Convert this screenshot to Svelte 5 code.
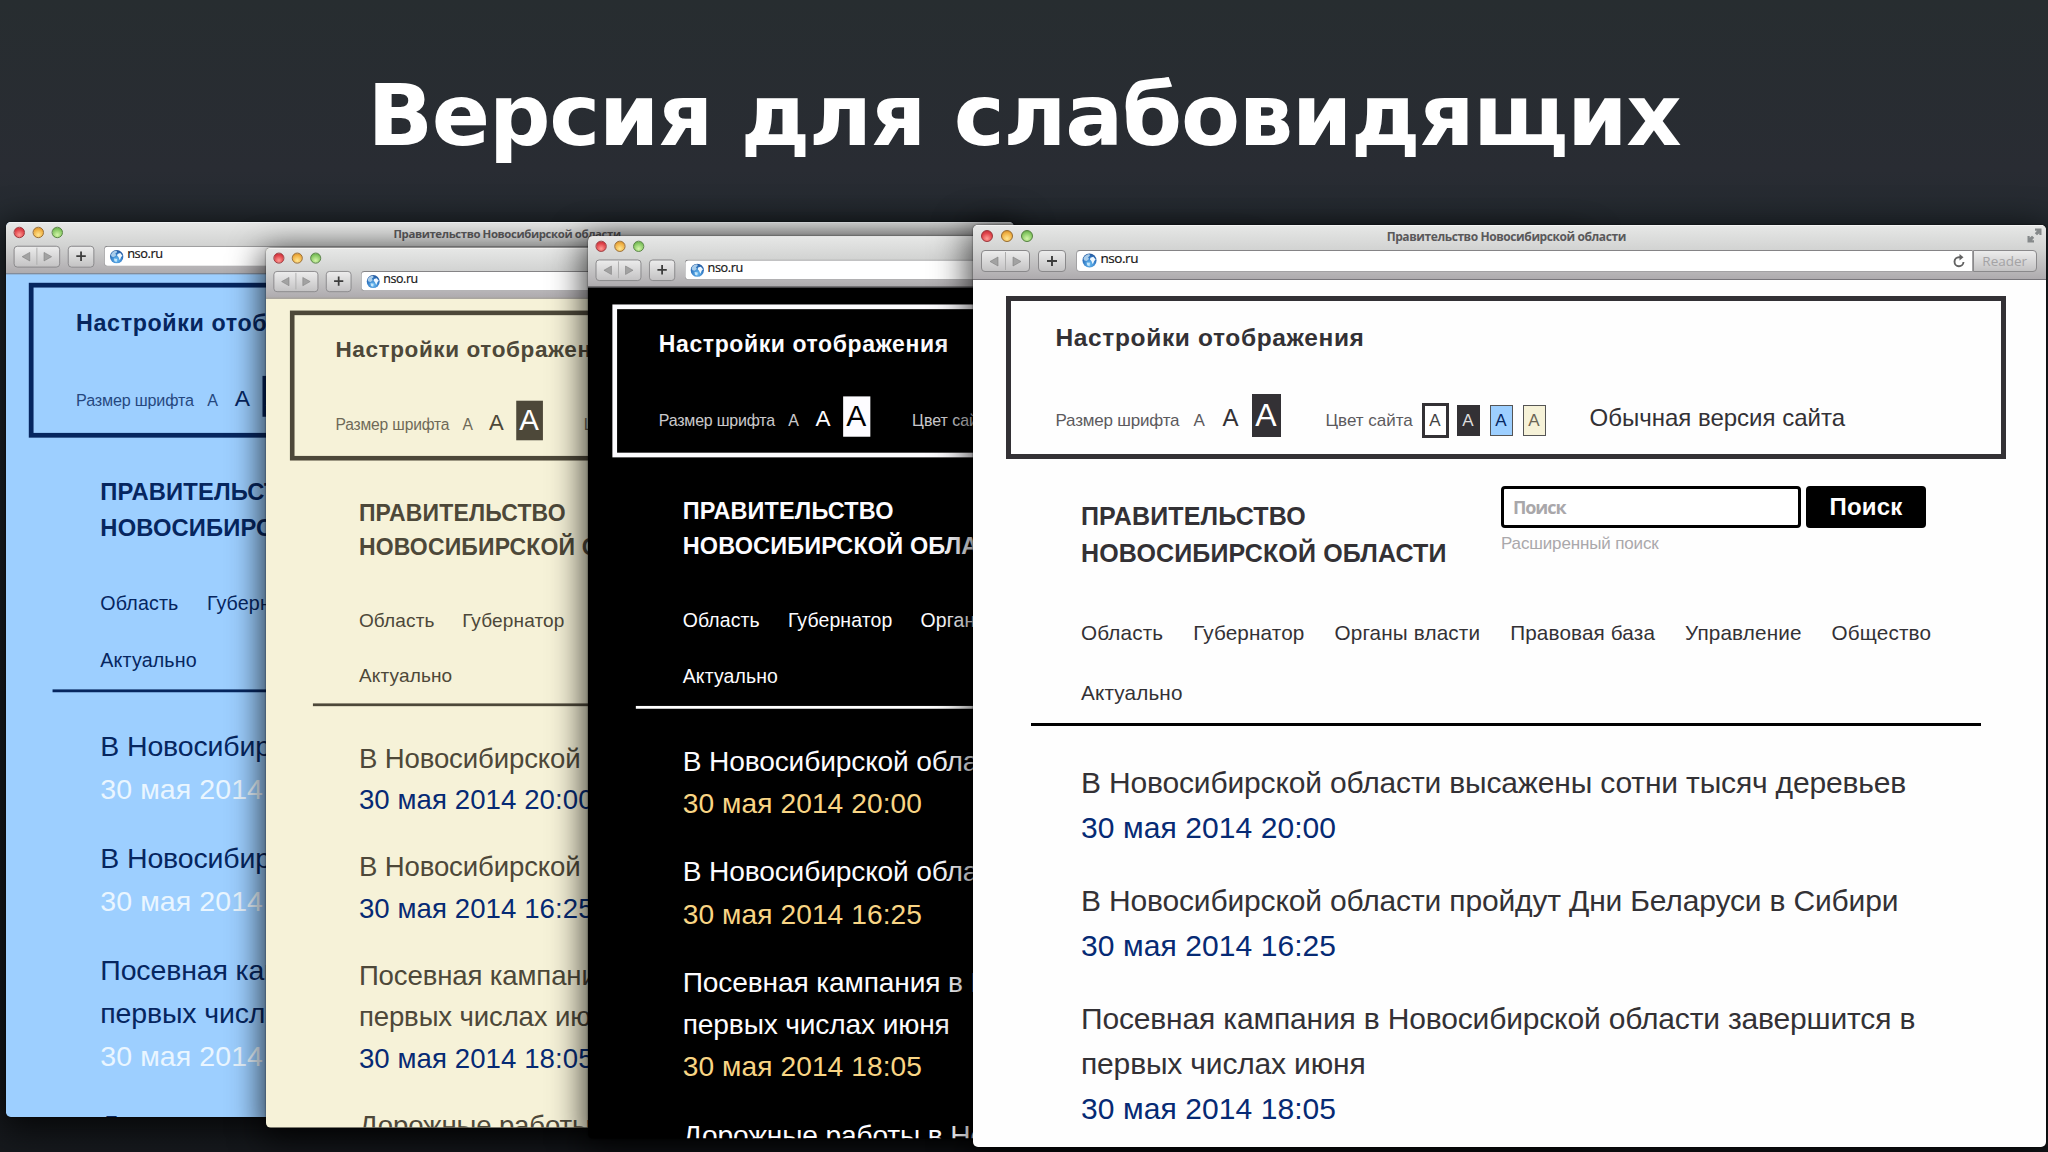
<script>
  const windows = [
    { theme: 'blue', x: 6, y: 221.5, scale: 0.95, width: 1061, height: 941.5, padX: 24.3, padY: 9.3, title: true },
    { theme: 'beige', x: 266, y: 247.5, scale: 0.92, width: 1061, height: 956, padX: 26, padY: 12.9, title: false },
    { theme: 'dark', x: 588, y: 236, scale: 0.938, width: 1061, height: 961.5, padX: 26, padY: 18, title: false },
    { theme: 'light', x: 973, y: 224.5, scale: 1, width: 1072.5, height: 922.5, padX: 33, padY: 16, title: true }
  ];
  const nav = ['Область', 'Губернатор', 'Органы власти', 'Правовая база', 'Управление', 'Общество', 'Актуально'];
  const news = [
    { lines: ['В Новосибирской области высажены сотни тысяч деревьев'], date: '30 мая 2014 20:00' },
    { lines: ['В Новосибирской области пройдут Дни Беларуси в Сибири'], date: '30 мая 2014 16:25' },
    { lines: ['Посевная кампания в Новосибирской области завершится в', 'первых числах июня'], date: '30 мая 2014 18:05' },
    { lines: ['Дорожные работы в Новосибирской области'], date: '' }
  ];
</script>

<main class="slide">
  <h1>Версия для слабовидящих</h1>

  {#each windows as w}
    <section
      class="window {w.theme}"
      style="left:{w.x}px;top:{w.y}px;width:{w.width}px;height:{w.height}px;transform:scale({w.scale});--pad-x:{w.padX}px;--pad-y:{w.padY}px"
    >
      <header class="chrome">
        <div class="titlebar">
          <div class="lights"><i class="red"></i><i class="amber"></i><i class="green"></i></div>
          {#if w.title}<span class="wtitle">Правительство Новосибирской области</span>{/if}
          <svg class="expand" viewBox="0 0 15 15" width="15" height="15">
            <path d="M8 .5h6.500V7h-2.200V5.200L10 7.300 7.800 5.200 10 2.800H8zM7 14.500H.5V8h2.200v1.800L5 7.700l2.200 2.100L5 12.200h2z" fill="#85898a" />
          </svg>
        </div>
        <div class="toolbar">
          <div class="btn arrows">
            <svg viewBox="0 0 49 22" width="49" height="22">
              <path d="M17 7v9L9 11.500z" fill="#a2a2a2" stroke="#7f7f7f" stroke-width=".6" />
              <path d="M32 7v9l8-4.500z" fill="#a2a2a2" stroke="#7f7f7f" stroke-width=".6" />
              <path d="M24.500 2v18" stroke="#adadad" />
            </svg>
          </div>
          <div class="btn plus">
            <svg viewBox="0 0 28 22" width="28" height="22"><path d="M14 6v10M9 11h10" stroke="#3c3c3c" stroke-width="1.900" /></svg>
          </div>
          <div class="address">
            <svg class="globe" viewBox="0 0 16 16" width="15" height="15">
              <defs>
                <radialGradient id="sea-{w.theme}" cx=".5" cy=".75" r=".75">
                  <stop offset="0" stop-color="#6cc0f5" /><stop offset=".6" stop-color="#3279c4" /><stop offset="1" stop-color="#24579c" />
                </radialGradient>
              </defs>
              <circle cx="8" cy="8" r="7.500" fill="url(#sea-{w.theme})" />
              <path d="M1.500 6C2.500 3 5 1.300 8 1.300L8.500 3 6.500 4.500 7.500 6.500 5 8.500 2.500 8z" fill="#a9cdeb" />
              <path d="M9 5l3-1 2.500 3-1.500 1.500L11.500 12 10 8.500 8.500 7z" fill="#eef8ff" />
              <path d="M5 10l3.500.5L8 14l-2.500-1z" fill="#c5e6fa" />
            </svg>
            <span>nso.ru</span>
            <svg class="reload" viewBox="0 0 14 14" width="14" height="14">
              <path d="M11.500 8A4.500 4.500 0 1 1 7 3.200h2" fill="none" stroke="#626262" stroke-width="1.900" />
              <path d="M7.500 0l4 3.200-4 3.200z" fill="#626262" />
            </svg>
          </div>
          <div class="reader">Reader</div>
        </div>
      </header>

      <div class="page">
        <div class="settings">
          <h2>Настройки отображения</h2>
          <div class="options">
            <span class="label size">Размер шрифта</span>
            <span class="a small">A</span>
            <span class="a medium">A</span>
            <span class="a large">A</span>
            <span class="label colour">Цвет сайта</span>
            <span class="swatch s-white">A</span>
            <span class="swatch s-dark">A</span>
            <span class="swatch s-blue">A</span>
            <span class="swatch s-beige">A</span>
            <span class="normal">Обычная версия сайта</span>
          </div>
        </div>

        <div class="head">
          <div class="org">ПРАВИТЕЛЬСТВО<br />НОВОСИБИРСКОЙ ОБЛАСТИ</div>
          <div class="search">
            <div class="row"><div class="field">Поиск</div><div class="submit">Поиск</div></div>
            <div class="advanced">Расширенный поиск</div>
          </div>
        </div>

        <nav>
          {#each nav as item}<span>{item}</span>{/each}
        </nav>
        <div class="rule"></div>

        <div class="news">
          {#each news as n}
            <article>
              {#each n.lines as l}<div>{l}</div>{/each}
              {#if n.date}<time>{n.date}</time>{/if}
            </article>
          {/each}
        </div>
      </div>
    </section>
  {/each}
</main>

<style>
  :global(body) { background: #14171b; overflow: hidden; }
  .slide {
    position: relative;
    width: 2048px;
    height: 1152px;
    overflow: hidden;
    background: linear-gradient(#272d30 0, #292c33 170px, #242a30 220px, #1a1e23 700px, #16191d 1152px);
    font-family: "Liberation Sans", Arial, sans-serif;
  }
  h1 {
    margin: 0;
    padding-top: 63px;
    text-align: center;
    font: bold 86px/104px "DejaVu Sans", Verdana, sans-serif;
    letter-spacing: -1.200px;
    color: #fff;
    white-space: nowrap;
  }
  .window {
    position: absolute;
    transform-origin: 0 0;
    display: flex;
    flex-direction: column;
    border-radius: 5px;
    overflow: hidden;
    box-shadow: 0 8px 36px 4px rgba(0, 0, 0, .75), 0 0 2px rgba(0, 0, 0, .7);
    background: var(--bg);
    color: var(--fg);
  }
  .light { --bg: #fefefe; --fg: #333135; --date: #062a74; --rule: #000; --inv: #fff; }
  .dark { --bg: #000; --fg: #fdfcff; --date: #f9d584; --rule: #fff; --inv: #000; }
  .beige { --bg: #f6f2d8; --fg: #4d4839; --date: #062a74; --rule: #4d4839; --inv: #fff; }
  .blue { --bg: #9dcfff; --fg: #06265f; --date: #eaf6ff; --rule: #06265f; --inv: #fff; }

  .chrome {
    flex: none;
    box-sizing: border-box;
    height: 55px;
    border-top: 1px solid #f4f4f4;
    border-bottom: 1px solid #77757a;
    background: linear-gradient(#e6e7e6, #d2d3d2 45%, #aeabae);
  }
  .titlebar {
    position: relative;
    display: flex;
    align-items: center;
    height: 24px;
  }
  .lights { display: flex; gap: 8px; padding-left: 7.500px; height: 12px; margin-top: -4px; }
  .lights i { width: 12px; height: 12px; box-sizing: border-box; border-radius: 50%; border: 1px solid; }
  .red { background: radial-gradient(circle at 50% 75%, #ff9c94, #e0434a 60%, #b92c33); border-color: #9a3338 !important; }
  .amber { background: radial-gradient(circle at 50% 75%, #ffe691, #f0b144 60%, #c98020); border-color: #96692c !important; }
  .green { background: radial-gradient(circle at 50% 75%, #d3f5a8, #88c965 60%, #559a3c); border-color: #53803e !important; }
  .wtitle {
    position: absolute;
    left: 0;
    right: 6px;
    top: 2.500px;
    text-align: center;
    font: 700 12px/18px "Open Sans", "Noto Sans", sans-serif;
    letter-spacing: -.420px;
    color: #5a595b;
    white-space: nowrap;
  }
  .expand { margin-left: auto; margin-right: 3.500px; margin-top: -4px; }
  .toolbar { display: flex; padding: 0 8.500px 0 7.500px; }
  .btn, .reader {
    box-sizing: border-box;
    height: 22.500px;
    border: 1px solid #8a898b;
    border-radius: 4px;
    background: linear-gradient(#ececec, #c4c3c4);
  }
  .btn svg { display: block; margin: -1px; }
  .arrows { width: 49px; margin-right: 8px; }
  .plus { width: 28.500px; margin-right: 10px; }
  .address {
    flex: 1;
    display: flex;
    align-items: center;
    box-sizing: border-box;
    height: 22px;
    padding: 0 6px 0 4.500px;
    border: 1px solid #a3a2a4;
    border-top-color: #858486;
    border-radius: 4px 0 0 4px;
    background: #fff;
  }
  .address span { margin: -6px auto 0 4px; font: 13.500px/18px "Open Sans", sans-serif; letter-spacing: -.450px; color: #111; -webkit-text-stroke: .2px #222; }
  .reader {
    width: 64.500px;
    border-radius: 0 4px 4px 0;
    text-align: center;
    font: 13.500px/21px "Open Sans", sans-serif;
    color: #a4a3a5;
  }

  .page { padding: var(--pad-y) 0 0 var(--pad-x); white-space: nowrap; }
  .settings {
    box-sizing: border-box;
    width: 1000px;
    height: 163px;
    border: 5px solid var(--fg);
    padding: 22.500px 0 0 44.500px;
  }
  h2 { margin: 0 0 40.500px; font: bold 24.500px/30px "Liberation Sans", sans-serif; letter-spacing: .640px; }
  .options { display: flex; align-items: baseline; font-size: 17px; }
  .label { opacity: .8; line-height: 20px; }
  .size { width: 138px; letter-spacing: -.200px; }
  .small { width: 29px; opacity: .8; }
  .medium { width: 29px; font-size: 24px; }
  .large {
    width: 29px;
    margin-right: 45px;
    font-size: 32px;
    line-height: 43px;
    text-align: center;
    background: var(--fg);
    color: var(--inv);
  }
  .colour { width: 96px; }
  .swatch { box-sizing: border-box; width: 23px; margin-right: 10px; line-height: 29px; text-align: center; border: 1px solid #555; color: #444; }
  .s-white { width: 27px; margin-right: 8px; line-height: 29px; border: 3px solid #333135; background: #fff; }
  .s-dark { background: #333135; border-color: #333135; color: #ddd; }
  .s-blue { background: #9dcfff; color: #06265f; }
  .s-beige { background: #f6f2d8; color: #6a6554; margin-right: 44px; }
  .normal { font-size: 24px; }

  .head { display: flex; margin: 27.500px 0 0 75px; height: 86px; }
  .org { width: 420px; padding-top: 11.500px; font: bold 25px/37px "Liberation Sans", sans-serif; letter-spacing: .150px; }
  .row { display: flex; gap: 5px; }
  .field, .submit { box-sizing: border-box; height: 42px; border-radius: 4px; }
  .field {
    width: 300px;
    border: 3px solid #000;
    padding-left: 9px;
    background: #fff;
    font: bold 18px/36px "Open Sans", sans-serif;
    letter-spacing: -1.100px;
    color: #a9a7aa;
  }
  .submit { width: 120px; text-align: center; background: #000; color: #fff; font: bold 24px/42px "Liberation Sans", sans-serif; letter-spacing: .200px; }
  .advanced { margin-top: 5px; font-size: 17px; line-height: 21px; color: #aaa8ab; letter-spacing: -.150px; }
  nav { display: flex; flex-wrap: wrap; column-gap: 30px; width: 900px; height: 120px; margin: 30.500px 0 0 75px; font-size: 20.700px; line-height: 60px; letter-spacing: .150px; }
  .rule { width: 950px; height: 3px; margin: .5px 0 0 25px; background: var(--rule); }
  .news { padding: 33.800px 0 0 75px; font-size: 30px; line-height: 45px; letter-spacing: -.160px; }
  article { margin-bottom: 28px; }
  time { display: block; color: var(--date); letter-spacing: .080px; }
</style>
